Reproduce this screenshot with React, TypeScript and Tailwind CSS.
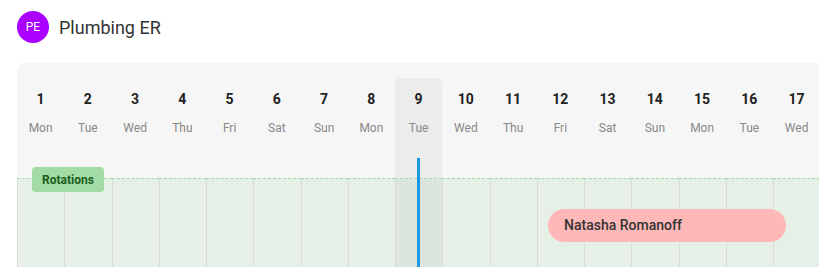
import React from "react";

const days = [
  { n: 1, d: "Mon" },
  { n: 2, d: "Tue" },
  { n: 3, d: "Wed" },
  { n: 4, d: "Thu" },
  { n: 5, d: "Fri" },
  { n: 6, d: "Sat" },
  { n: 7, d: "Sun" },
  { n: 8, d: "Mon" },
  { n: 9, d: "Tue" },
  { n: 10, d: "Wed" },
  { n: 11, d: "Thu" },
  { n: 12, d: "Fri" },
  { n: 13, d: "Sat" },
  { n: 14, d: "Sun" },
  { n: 15, d: "Mon" },
  { n: 16, d: "Tue" },
  { n: 17, d: "Wed" },
];

const today = 9;

export default function App() {
  return (
    <div
      className="h-[267px] w-[819px] overflow-hidden bg-white"
      style={{ fontFamily: "Roboto, 'Liberation Sans', sans-serif" }}
    >
      <div className="flex items-center gap-[10px] pl-[17px] pt-[11px]">
        <div className="flex h-8 w-8 items-center justify-center rounded-full bg-[#aa00ff] text-[12px] text-white">
          PE
        </div>
        <span className="text-[18px] text-[#333]">Plumbing ER</span>
      </div>

      <div className="relative ml-[17px] mt-[20px] flex h-[300px] w-[820px] rounded-tl-[8px] bg-[#f6f6f6]">
        {days.map((day) => {
          const active = day.n === today;
          return (
            <div key={day.n} className="flex w-[47.25px] shrink-0 flex-col">
              <div className="h-[115px] pt-[15px]">
                <div
                  className={`flex h-full flex-col items-center rounded-t-[5px] ${
                    active ? "bg-black/[0.04]" : ""
                  }`}
                >
                  <span className="mt-[11px] text-[14px] font-bold leading-5 text-[#222]">
                    {day.n}
                  </span>
                  <span className="mt-[11px] text-[12px] leading-4 text-[#888]">
                    {day.d}
                  </span>
                </div>
              </div>
              <div className="flex-1 border-t border-dashed border-[#a3dca3] bg-[#e6f0e6]">
                <div
                  className={`h-full border-l border-[#dadada] ${
                    active ? "bg-black/[0.04]" : ""
                  }`}
                />
              </div>
            </div>
          );
        })}

        <div className="absolute left-[15px] top-[104px] flex h-[25px] w-[72px] items-center justify-center rounded-[4px] bg-[#a2dca4] text-[12px] font-bold text-[#1b5e20]">
          Rotations
        </div>

        <div className="absolute left-[399.5px] top-[95px] h-[200px] w-[3px] bg-[#1e9be0]" />

        <div className="absolute left-[531px] top-[146px] flex h-[33px] w-[238px] items-center rounded-full bg-[#ffb8b8] pl-4 text-[14px] font-medium text-[#333]">
          Natasha Romanoff
        </div>
      </div>
    </div>
  );
}
